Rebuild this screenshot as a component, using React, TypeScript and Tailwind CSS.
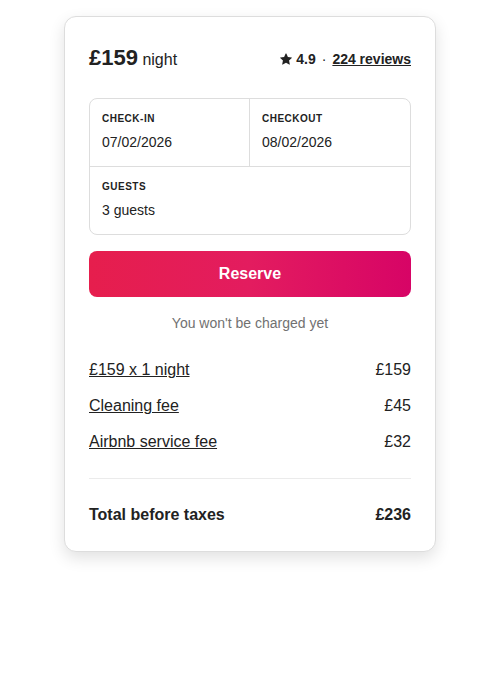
import { useState } from "react";

const fees = [
  { label: "£159 x 1 night", amount: "£159" },
  { label: "Cleaning fee", amount: "£45" },
  { label: "Airbnb service fee", amount: "£32" },
];

function Field({
  id,
  label,
  initial,
  className = "",
}: {
  id: string;
  label: string;
  initial: string;
  className?: string;
}) {
  const [value, setValue] = useState(initial);
  return (
    <div className={`min-w-0 p-3 ${className}`}>
      <label htmlFor={id} className="mb-1 block text-[10px] leading-[15px] font-bold tracking-[0.5px] uppercase">
        {label}
      </label>
      <input
        id={id}
        type="text"
        value={value}
        onChange={(e) => setValue(e.target.value)}
        className="block h-6 w-full bg-transparent text-sm outline-none"
      />
    </div>
  );
}

export default function App() {
  return (
    <main className="min-h-screen bg-white p-4 font-['Liberation_Sans',Arial,sans-serif] text-[#222222]">
      <section className="mx-auto w-full max-w-[372px] rounded-xl border border-[#dddddd] bg-white p-6 shadow-[0_6px_16px_rgba(0,0,0,0.12)]">
        <header className="mb-6 flex items-center justify-between">
          <p className="text-base">
            <span className="text-[22px] leading-[33px] font-bold">£159</span> night
          </p>
          <div className="flex items-center pt-0.5 text-sm font-bold">
            <svg viewBox="0 0 32 32" aria-hidden="true" className="mr-1 h-3 w-3 fill-current">
              <path d="M15.094 1.579l-4.124 8.885-9.86 1.27a1 1 0 0 0-.542 1.736l7.293 6.565-1.965 9.852a1 1 0 0 0 1.483 1.061L16 25.951l8.625 4.997a1 1 0 0 0 1.482-1.06l-1.965-9.853 7.293-6.565a1 1 0 0 0-.541-1.735l-9.86-1.271-4.127-8.885a1 1 0 0 0-1.814 0z" />
            </svg>
            <span>4.9</span>
            <span className="mx-1.5 font-normal">·</span>
            <a href="#reviews" className="underline">
              224 reviews
            </a>
          </div>
        </header>

        <form onSubmit={(e) => e.preventDefault()}>
          <div className="grid grid-cols-2 rounded-lg border border-[#dddddd]">
            <Field id="checkin" label="Check-in" initial="07/02/2026" className="border-r border-[#dddddd]" />
            <Field id="checkout" label="Checkout" initial="08/02/2026" />
            <Field id="guests" label="Guests" initial="3 guests" className="col-span-2 border-t border-[#dddddd]" />
          </div>
          <button
            type="submit"
            className="mt-4 block w-full rounded-lg bg-[linear-gradient(to_right,#e61e4d_0%,#e31c5f_50%,#d70466_100%)] py-3 text-base leading-[22px] font-bold text-white"
          >
            Reserve
          </button>
        </form>

        <p className="mt-4 text-center text-sm leading-[21px] text-[#717171]">You won't be charged yet</p>

        <ul className="mt-6 flex flex-col gap-3">
          {fees.map((fee) => (
            <li key={fee.label} className="flex justify-between">
              <span className="underline">{fee.label}</span>
              <span>{fee.amount}</span>
            </li>
          ))}
        </ul>

        <div className="mt-6 flex justify-between border-t border-[#ebebeb] pt-6 font-bold">
          <span>Total before taxes</span>
          <span>£236</span>
        </div>
      </section>
    </main>
  );
}
